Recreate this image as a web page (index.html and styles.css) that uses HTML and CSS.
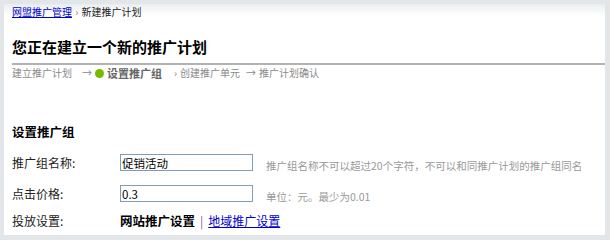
FILE: index.html
```html
<!DOCTYPE html>
<html>
<head>
    <title>新建推广计划</title>
    <link rel="stylesheet" href="styles.css">
</head>
<body>
    <div class="page">
        <div class="crumb">
            <a href="#">网盟推广管理</a>
            <span class="sep">›</span>
            <span>新建推广计划</span>
        </div>
        <h1 class="title">您正在建立一个新的推广计划</h1>
        <div class="steps">
            <span>建立推广计划</span>
            <span class="arrow first">→</span>
            <span class="dot"></span>
            <span class="current">设置推广组</span>
            <span class="sep">›</span>
            <span>创建推广单元</span>
            <span class="arrow">→</span>
            <span>推广计划确认</span>
        </div>
        <h2 class="section">设置推广组</h2>
        <div class="row row-name">
            <label class="label" for="name">推广组名称:</label>
            <input class="field" type="text" id="name" value="促销活动">
            <span class="hint">推广组名称不可以超过20个字符，不可以和同推广计划的推广组同名</span>
        </div>
        <div class="row row-price">
            <label class="label" for="price">点击价格:</label>
            <input class="field" type="text" id="price" value="0.3">
            <span class="hint">单位：元。最少为0.01</span>
        </div>
        <div class="row row-put">
            <span class="label">投放设置:</span>
            <span class="tab-on">网站推广设置</span>
            <span class="bar">|</span>
            <a href="#" class="tab">地域推广设置</a>
        </div>
    </div>
</body>
</html>
```

FILE: styles.css
```css
body {
    margin: 0;
    padding: 4px 5px 5px 4px;
    background-color: #e2e6e9;
    font-family: "Noto Sans CJK SC", "Liberation Sans", sans-serif;
    color: #222;
}
.page {
    height: 231px;
    padding-left: 8px;
    background: linear-gradient(#eaedef, #ffffff 11px);
}
a {
    color: #0000cc;
}
.crumb {
    font-size: 10px;
    line-height: 16px;
    color: #222;
}
.crumb .sep {
    color: #888;
    margin: 0 1px;
}
.title {
    margin: 17px 0 0 0;
    padding-bottom: 6px;
    font-size: 15px;
    line-height: 20px;
    color: #000;
    border-bottom: 2px solid #b2b2b2;
}
.steps {
    display: flex;
    align-items: center;
    margin-top: 1px;
    font-size: 10px;
    line-height: 14px;
    color: #8a8a8a;
}
.steps .arrow {
    margin: 0 3px 0 6px;
}
.steps .arrow.first {
    margin: 0 3px 0 10px;
}
.steps .dot {
    width: 9px;
    height: 9px;
    border-radius: 50%;
    background-color: #76b900;
    margin: 0 3px 0 0;
}
.steps .current {
    font-weight: bold;
    font-size: 11px;
    color: #666;
    margin-right: 12px;
}
.steps .sep {
    margin-right: 3px;
}
.section {
    margin: 44px 0 0 0;
    font-size: 12.5px;
    line-height: 16px;
    color: #000;
}
.row {
    display: flex;
    align-items: flex-start;
    height: 17px;
    font-size: 12px;
    line-height: 17px;
}
.row-name {
    margin-top: 14px;
}
.row-price {
    margin-top: 14px;
}
.row-put {
    margin-top: 10px;
}
.label {
    width: 108px;
    color: #222;
}
.field {
    box-sizing: border-box;
    width: 133px;
    height: 17px;
    margin: 0;
    padding: 0 1px;
    border: 1px solid #7f9db9;
    font-family: inherit;
    font-size: 11.5px;
    color: #000;
}
.hint {
    margin-left: 13px;
    padding-top: 5px;
    font-size: 10.5px;
    line-height: 14px;
    color: #999;
}
.tab-on {
    font-weight: bold;
    font-size: 12.5px;
    color: #000;
}
.bar {
    margin: 0 5px;
    color: #8060a0;
}
.tab {
    font-size: 12px;
}
```
